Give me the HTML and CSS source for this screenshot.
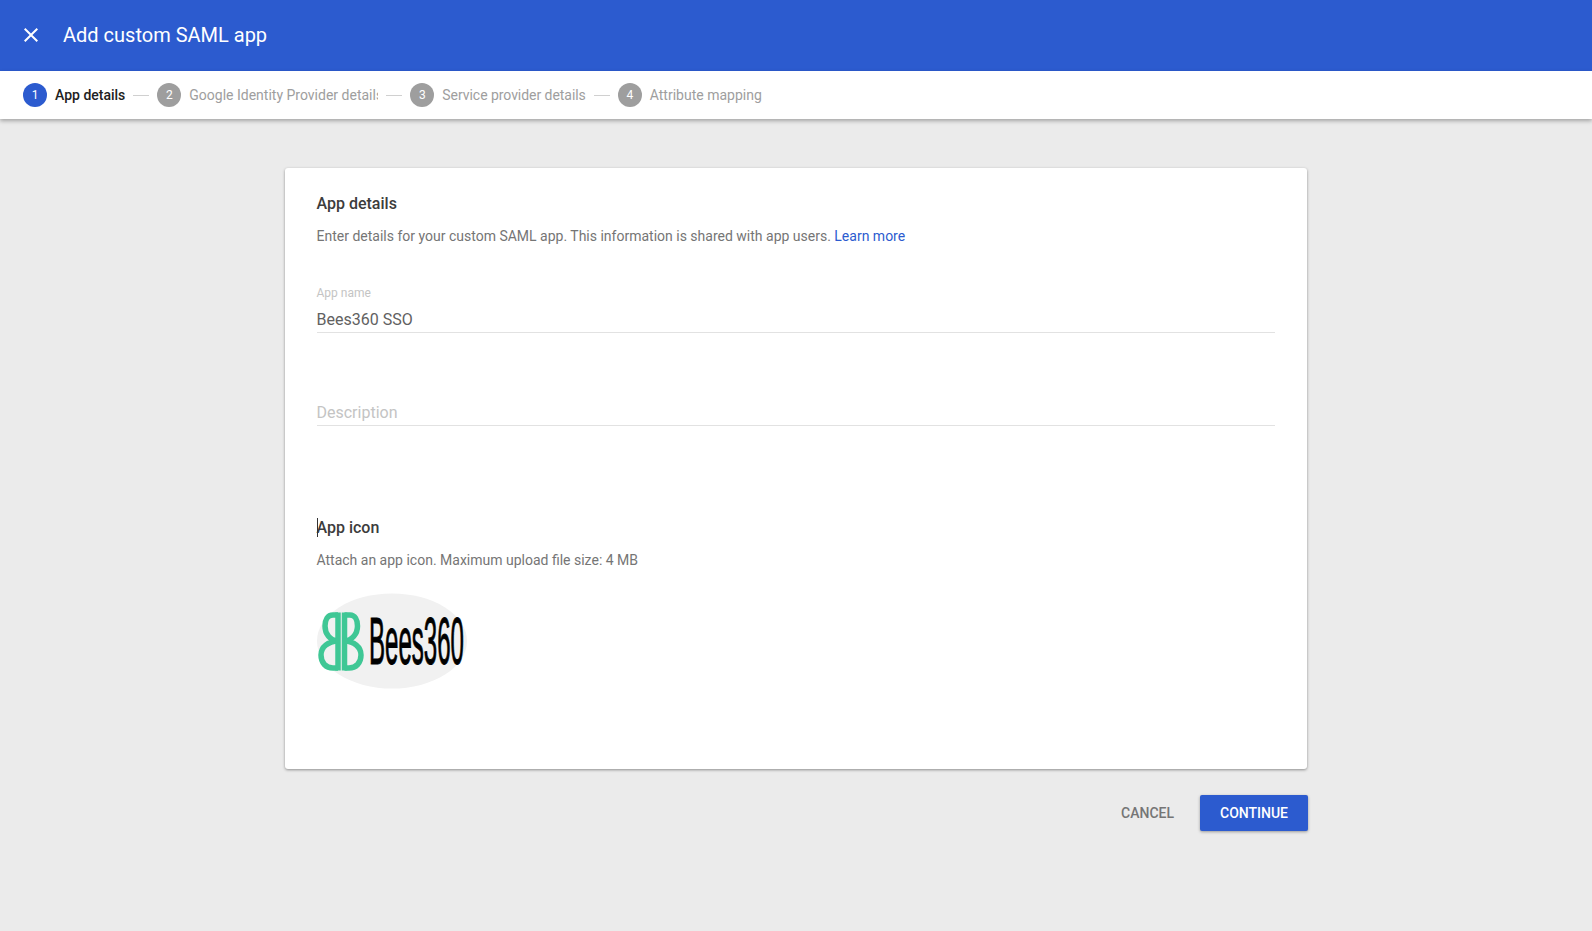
FILE: index.html
```html
<!DOCTYPE html>
<html lang="en">
<head>
<meta charset="utf-8">
<title>Add custom SAML app</title>
<link rel="stylesheet" href="styles.css">
</head>
<body>
<header class="topbar">
  <svg class="close" viewBox="0 0 24 24" width="24" height="24"><path d="M19 6.41 17.59 5 12 10.59 6.41 5 5 6.41 10.59 12 5 17.59 6.41 19 12 13.41 17.59 19 19 17.59 13.41 12z" fill="#fff"/></svg>
  <h1 class="title">Add custom SAML app</h1>
</header>
<nav class="stepper">
  <div class="step step-active"><span class="num">1</span><span class="label">App details</span></div>
  <span class="dash"></span>
  <div class="step"><span class="num">2</span><span class="label label-clip">Google Identity Provider details</span></div>
  <span class="dash"></span>
  <div class="step"><span class="num">3</span><span class="label label-tight">Service provider details</span></div>
  <span class="dash"></span>
  <div class="step"><span class="num">4</span><span class="label">Attribute mapping</span></div>
</nav>
<main class="main">
  <section class="card">
    <h2 class="heading">App details</h2>
    <p class="help">Enter details for your custom SAML app. This information is shared with app users. <a class="link" href="#">Learn more</a></p>
    <div class="field field-name">
      <div class="field-label">App name</div>
      <div class="field-value">Bees360 SSO</div>
    </div>
    <div class="field field-desc">
      <div class="field-placeholder">Description</div>
    </div>
    <h2 class="heading heading-icon"><span class="caret"></span>App icon</h2>
    <p class="help">Attach an app icon. Maximum upload file size: 4 MB</p>
    <svg class="logo" viewBox="0 0 150 96" width="150" height="96">
      <ellipse cx="75" cy="48" rx="75" ry="47.500" fill="#f1f1f1"/>
      <g fill="none" stroke="#3fc795" stroke-width="5.500">
        <path d="M21 22H16C10.500 22 8 27 8 33C8 41 13 47.500 21 48C11 48.500 4 54 4 62C4 70 9 75 16 75H21"/>
        <path d="M21 19.500V77.500"/>
        <path d="M27.500 19.500V77.500"/>
        <path d="M27.500 22H33C38 22 40.500 27 40.500 33C40.500 41 35 47.500 27.500 48C37 48.500 44 54 44 62C44 70 39 75 32 75H27.500"/>
      </g>
      <text class="logo-text" x="52" y="71" textLength="95" lengthAdjust="spacingAndGlyphs">Bees360</text>
    </svg>
  </section>
  <div class="actions">
    <button class="btn btn-text" type="button">CANCEL</button>
    <button class="btn btn-primary" type="button">CONTINUE</button>
  </div>
</main>
</body>
</html>
```
FILE: styles.css
```css
* { box-sizing: border-box; }
html, body { margin: 0; height: 100%; }
body {
  background: #ebebeb;
  font-family: Roboto, "Liberation Sans", sans-serif;
  overflow: hidden;
}
.topbar {
  height: 71px;
  background: #2c5bcf;
  display: flex;
  align-items: center;
  padding: 0 0 2px 19px;
}
.close { flex: none; }
.title {
  margin: 0 0 0 20px;
  font-size: 20px;
  font-weight: 400;
  color: #fff;
}
.stepper {
  height: 48px;
  background: #fff;
  display: flex;
  align-items: center;
  padding-left: 23px;
  box-shadow: 0 2px 4px rgba(0,0,0,.3);
  position: relative;
}
.step { display: flex; align-items: center; }
.num {
  width: 24px;
  height: 24px;
  border-radius: 50%;
  background: #9e9e9e;
  color: #fff;
  font-size: 12px;
  display: flex;
  align-items: center;
  justify-content: center;
}
.label {
  margin-left: 8px;
  font-size: 14px;
  color: #9e9e9e;
  white-space: nowrap;
}
.label-clip { width: 189px; overflow: hidden; }
.label-tight { letter-spacing: -0.05px; }
.step-active .num { background: #2c5bcf; }
.step-active .label { color: #212121; font-weight: 500; }
.dash {
  width: 16px;
  height: 1px;
  background: #d0d0d0;
  margin: 0 8px;
}
.main {
  width: 1022px;
  margin: 49px auto 0;
}
.card {
  height: 601px;
  background: #fff;
  border-radius: 3px;
  box-shadow: 0 1px 3px rgba(0,0,0,.4);
  padding: 26px 32px 0 31.5px;
}
.heading {
  margin: 0;
  font-size: 16px;
  line-height: 20px;
  font-weight: 500;
  color: #3c3c3c;
  position: relative;
}
.help {
  margin: 12px 0 0;
  font-size: 14px;
  line-height: 20px;
  color: #757575;
}
.link { color: #2c5bcf; text-decoration: none; }
.field { border-bottom: 1px solid #e2e2e2; }
.field-name { margin-top: 39px; height: 48px; }
.field-label { font-size: 12px; line-height: 16px; color: #c4c4c4; }
.field-value { margin-top: 9px; font-size: 16px; line-height: 20px; color: #616161; }
.field-desc { margin-top: 70px; height: 23px; }
.field-placeholder { font-size: 16px; line-height: 20px; color: #c4c4c4; }
.heading-icon { margin-top: 92px; }
.caret {
  position: absolute;
  left: 0;
  top: 0;
  width: 1px;
  height: 19px;
  background: #333;
}
.logo { display: block; margin: 23px 0 0 .5px; }
.logo-text {
  font-family: "Liberation Sans", sans-serif;
  font-size: 66px;
  font-weight: 400;
  fill: #000;
  stroke: #000;
  stroke-width: 1;
}
.actions {
  margin: 26px -1px 0 0;
  display: flex;
  justify-content: flex-end;
  align-items: center;
  gap: 6px;
}
.btn {
  height: 36px;
  border: 0;
  border-radius: 2px;
  font-family: inherit;
  font-size: 14px;
  font-weight: 500;
  background: none;
  padding: 0 20px;
}
.btn-text { color: #757575; }
.btn-primary {
  width: 108px;
  background: #2c5bcf;
  color: #fff;
  box-shadow: 0 1px 3px rgba(0,0,0,.35);
}
```
